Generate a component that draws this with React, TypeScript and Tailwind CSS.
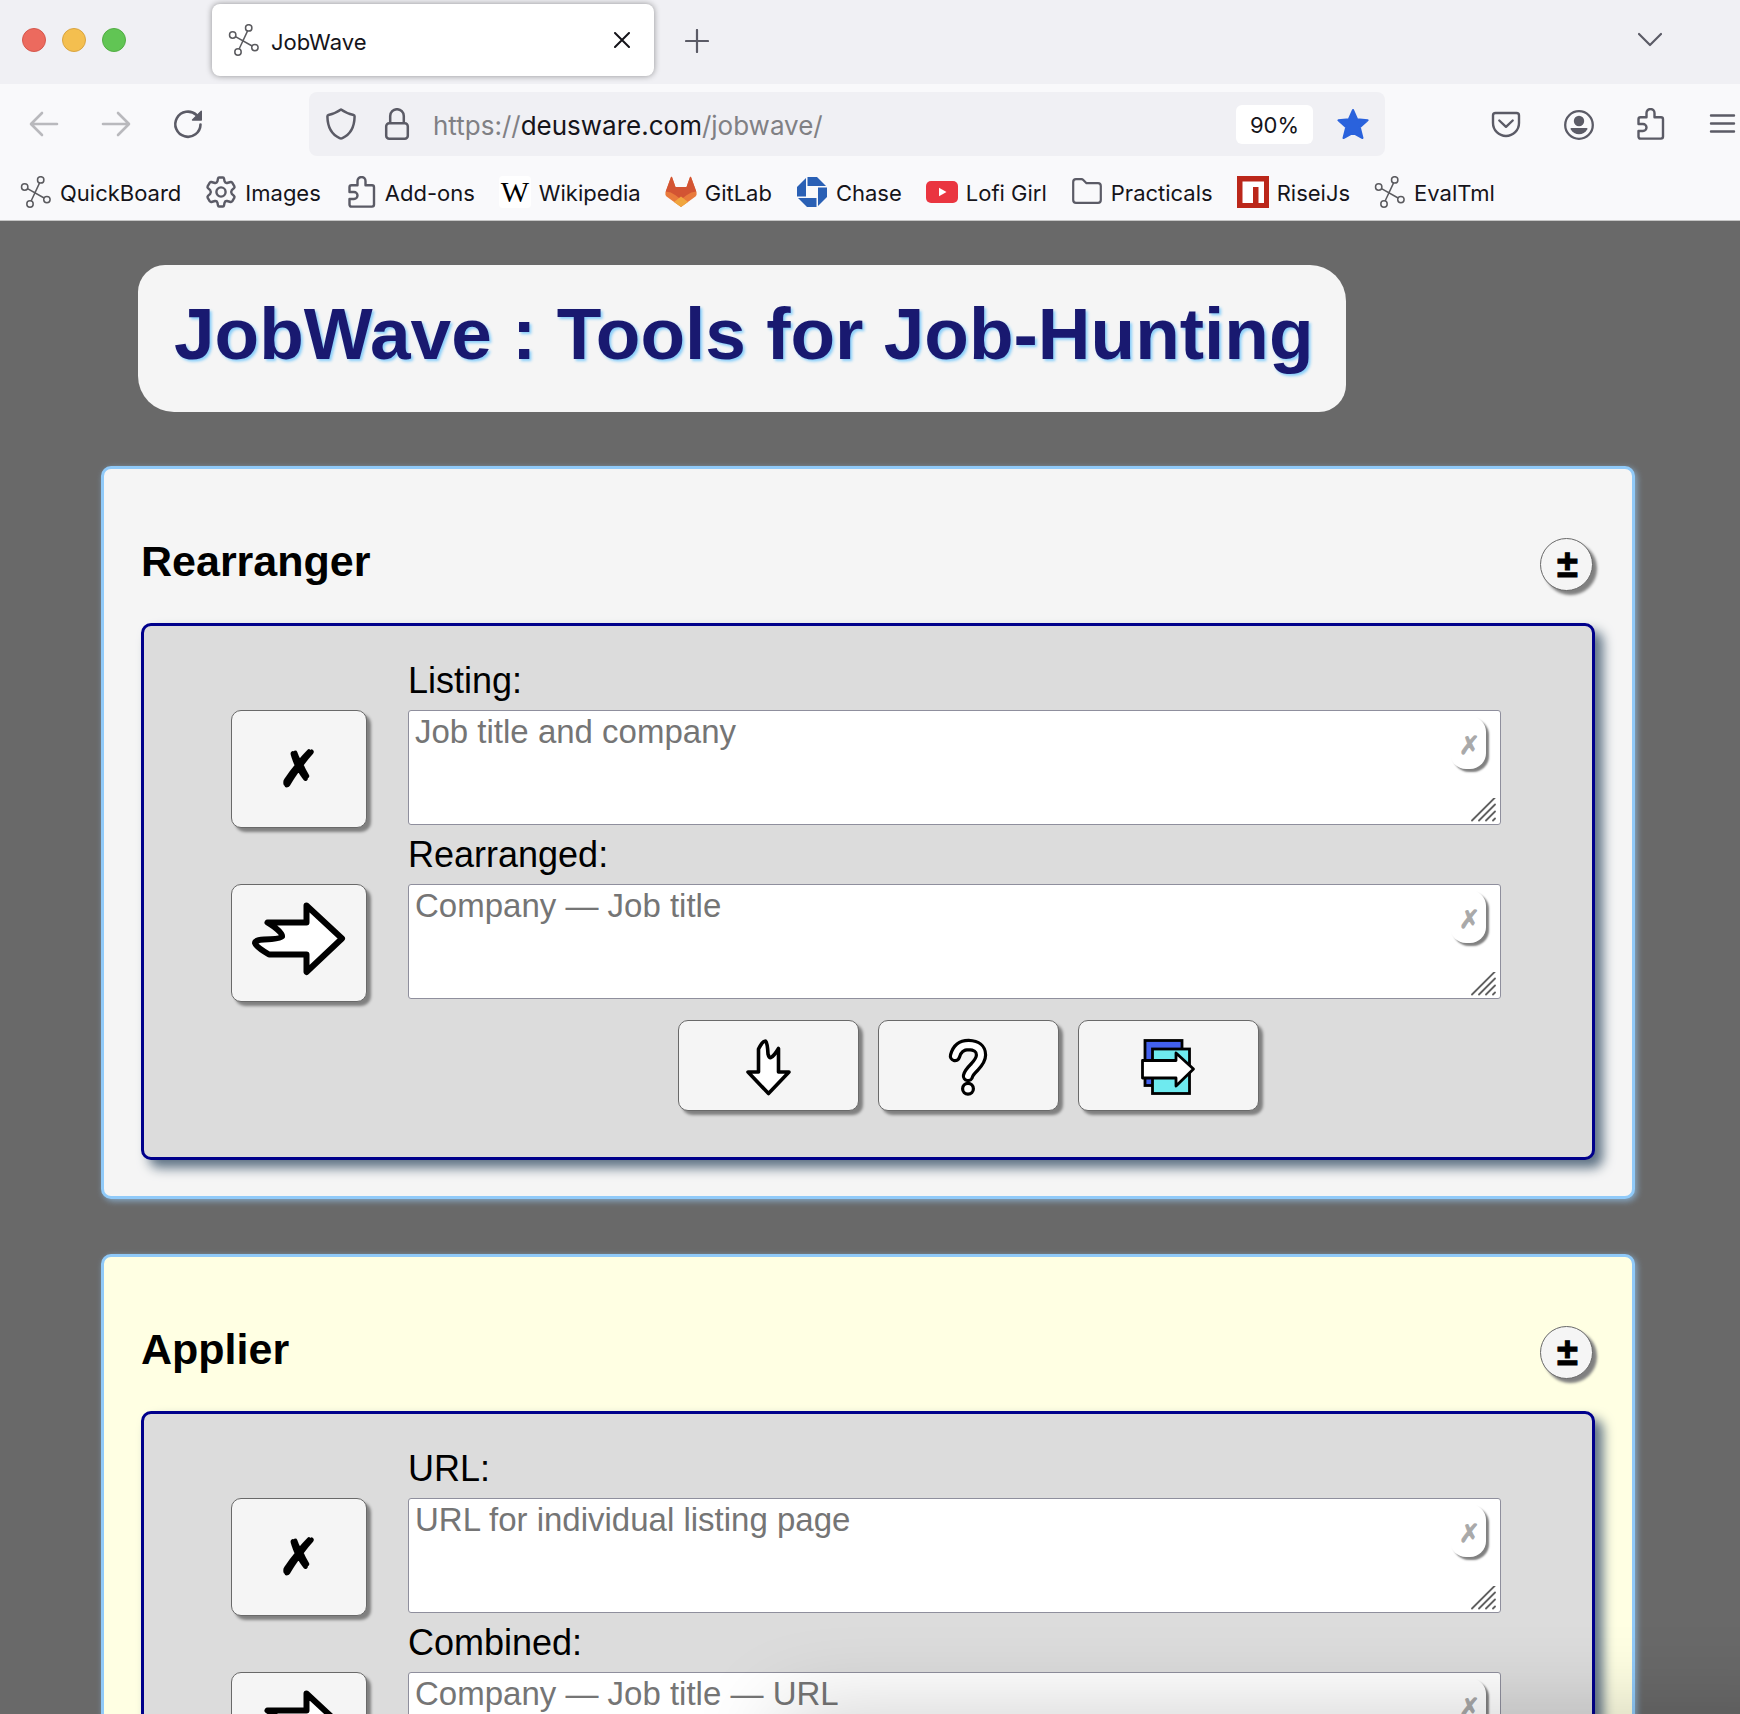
import React from "react";

type IconProps = { className?: string };

function NodesIcon({ className }: IconProps) {
  return (
    <svg viewBox="0 0 32 32" className={className} fill="none" stroke="#5b5b5f" strokeWidth="1.5" aria-hidden="true">
      <circle cx="20.7" cy="3.9" r="3.2" />
      <circle cx="4.7" cy="11" r="3.2" />
      <circle cx="26.9" cy="23.6" r="3.2" />
      <circle cx="10" cy="28" r="3.2" />
      <path d="M19.6 6.9 L11.1 25 M7.5 12.6 L24.1 22" />
    </svg>
  );
}

function ArrowIcon({ className }: IconProps) {
  return (
    <svg viewBox="0 0 32 32" className={className} fill="none" stroke="#b9b9bd" strokeWidth="2.6" strokeLinecap="round" strokeLinejoin="round" aria-hidden="true">
      <path d="M29 16 H3.5 M14 5 L3 16 L14 27" />
    </svg>
  );
}

function ReloadIcon({ className }: IconProps) {
  return (
    <svg viewBox="0 0 32 32" className={className} fill="none" stroke="#5b5b66" strokeWidth="2.6" strokeLinecap="round" aria-hidden="true">
      <path d="M28.5 16.5 A12.6 12.6 0 1 1 24.5 7" />
      <path d="M29.3 3.2 V12 H20.5 Z" fill="#5b5b66" strokeWidth="1.4" strokeLinejoin="round" />
    </svg>
  );
}

function ShieldIcon({ className }: IconProps) {
  return (
    <svg viewBox="0 0 32 32" className={className} fill="none" stroke="#5b5b66" strokeWidth="2.5" strokeLinejoin="round" aria-hidden="true">
      <path d="M16 1.6 C12 4.6 8 6 3.4 7 Q2.4 7.3 2.4 8.6 C2.6 19 6.5 26.5 14.6 30.2 Q16 30.9 17.4 30.2 C25.5 26.5 29.4 19 29.6 8.6 Q29.6 7.3 28.6 7 C24 6 20 4.6 16 1.6 Z" />
    </svg>
  );
}

function LockIcon({ className }: IconProps) {
  return (
    <svg viewBox="0 0 32 32" className={className} fill="none" stroke="#5b5b66" strokeWidth="2.5" aria-hidden="true">
      <rect x="5.2" y="15.2" width="21.6" height="15.5" rx="3" />
      <path d="M9.2 15 V8 A6.8 6.8 0 0 1 22.8 8 V15" />
    </svg>
  );
}

function StarIcon({ className }: IconProps) {
  return (
    <svg viewBox="0 0 32 32" className={className} fill="#2a62dc" stroke="#2a62dc" strokeWidth="2" strokeLinejoin="round" aria-hidden="true">
      <path d="M16 2 L20.1 11.2 L30.6 12.3 L22.8 19.3 L25.5 30 L16 24.8 L6.5 30 L9.2 19.3 L1.4 12.3 L11.9 11.2 Z" />
    </svg>
  );
}

function PocketIcon({ className }: IconProps) {
  return (
    <svg viewBox="0 0 32 32" className={className} fill="none" stroke="#5b5b66" strokeWidth="2.4" strokeLinecap="round" strokeLinejoin="round" aria-hidden="true">
      <path d="M5.5 5 H26.5 Q29 5 29 7.5 V15 A13 13 0 0 1 3 15 V7.5 Q3 5 5.5 5 Z" />
      <path d="M9.3 12.5 L16 18.8 L22.7 12.5" />
    </svg>
  );
}

function AccountIcon({ className }: IconProps) {
  return (
    <svg viewBox="0 0 32 32" className={className} aria-hidden="true">
      <circle cx="17" cy="17" r="13.8" fill="none" stroke="#5b5b66" strokeWidth="2.3" />
      <circle cx="17" cy="13" r="5.2" fill="#5b5b66" />
      <path d="M9.4 20 H24.6 Q26 20 25.2 21.5 A9.5 9.5 0 0 1 8.8 21.5 Q8 20 9.4 20 Z" fill="#5b5b66" />
    </svg>
  );
}

function PuzzleIcon({ className }: IconProps) {
  return (
    <svg viewBox="0 0 32 32" className={className} fill="none" stroke="#5b5b66" strokeWidth="2.4" strokeLinejoin="round" aria-hidden="true">
      <path d="M4.500 16 V11.2 Q4.500 9.2 6.500 9.2 H12.500 V5 A4 4 0 0 1 20.500 5 V9.2 H27 Q29 9.2 29 11.2 V28.6 Q29 30.6 27 30.6 H6.500 Q4.500 30.6 4.500 28.6 V23 H9 A3.5 3.5 0 0 0 9 16 Z" />
    </svg>
  );
}

function GearIcon({ className }: IconProps) {
  return (
    <svg viewBox="0 0 32 32" className={className} fill="none" stroke="#5b5b66" strokeWidth="2.4" strokeLinejoin="round" aria-hidden="true">
      <circle cx="16" cy="16" r="4.6" />
      <path d="M14 1.5 H18 Q18.8 1.5 19 2.4 L19.6 5.4 Q20.2 7.3 22 7 L25.6 6 Q26.6 5.8 27.2 6.6 L29.4 10.4 Q29.8 11.4 29 12.2 L26.8 14.2 Q25.6 16 26.8 17.8 L29 19.8 Q29.8 20.6 29.4 21.6 L27.2 25.4 Q26.6 26.2 25.6 26 L22 25 Q20.2 24.7 19.6 26.6 L19 29.6 Q18.8 30.5 18 30.5 H14 Q13.2 30.5 13 29.6 L12.4 26.6 Q11.8 24.7 10 25 L6.4 26 Q5.4 26.2 4.8 25.4 L2.6 21.6 Q2.2 20.6 3 19.8 L5.2 17.8 Q6.4 16 5.2 14.2 L3 12.2 Q2.2 11.4 2.6 10.4 L4.8 6.6 Q5.4 5.8 6.4 6 L10 7 Q11.8 7.3 12.4 5.4 L13 2.4 Q13.2 1.5 14 1.5 Z" />
    </svg>
  );
}

function WikipediaIcon({ className }: IconProps) {
  return (
    <span className={`${className} flex items-center justify-center rounded bg-white font-['Liberation_Serif'] text-[30px] leading-none text-black`} aria-hidden="true">
      W
    </span>
  );
}

function GitLabIcon({ className }: IconProps) {
  return (
    <svg viewBox="0 0 32 32" className={className} aria-hidden="true">
      <path d="M16 31 L1.5 20.5 Q0 19 0.4 16.5 L6 1 Q6.5 0.3 7 1 L10.5 11 H21.5 L25 1 Q25.5 0.3 26 1 L31.6 16.5 Q32 19 30.5 20.5 Z" fill="#e97a3c" />
      <path d="M0.7 15.5 L6 1 Q6.5 0.3 7 1 L10.5 11 H21.5 L25 1 Q25.5 0.3 26 1 L31.3 15.5 Q26 15.8 21.5 19.3 L16 23.5 L10.5 19.3 Q6 15.8 0.7 15.5 Z" fill="#d35433" />
      <path d="M16 31 L9 26 L16 20.5 L23 26 Z" fill="#f0a63f" />
    </svg>
  );
}

function ChaseIcon({ className }: IconProps) {
  return (
    <svg viewBox="0 0 32 32" className={className} fill="#2a60b5" aria-hidden="true">
      <path d="M11.5 1 H21 L30 10 H11.5 Z" />
      <path d="M31 11.5 V21 L22 30 V11.5 Z" />
      <path d="M20.5 31 H11 L2 22 H20.5 Z" />
      <path d="M1 20.5 V11 L10 2 V20.5 Z" />
    </svg>
  );
}

function YouTubeIcon({ className }: IconProps) {
  return (
    <svg viewBox="0 0 32 32" className={className} aria-hidden="true">
      <rect x="0" y="5" width="32" height="22" rx="5" fill="#ea3540" />
      <path d="M13 11.8 L20.5 16 L13 20.2 Z" fill="#fff" />
    </svg>
  );
}

function FolderIcon({ className }: IconProps) {
  return (
    <svg viewBox="0 0 32 32" className={className} fill="none" stroke="#5b5b66" strokeWidth="2.2" strokeLinejoin="round" aria-hidden="true">
      <path d="M2.2 24 V6 Q2.2 3.2 5 3.2 H10.5 Q11.5 3.2 12.3 4 L15.5 7.2 H27 Q29.8 7.2 29.8 10 V24 Q29.8 26.8 27 26.8 H5 Q2.2 26.8 2.2 24 Z" />
    </svg>
  );
}

function NpmIcon({ className }: IconProps) {
  return (
    <svg viewBox="0 0 32 32" className={className} aria-hidden="true">
      <rect width="32" height="32" fill="#bb271a" />
      <path d="M5.5 5.5 H27 V27 H21.5 V11 H16 V27 H5.5 Z" fill="#fff" />
    </svg>
  );
}

function TornArrowRight({ className }: IconProps) {
  return (
    <svg viewBox="0 0 96 76" className={className} fill="#fff" stroke="#000" strokeWidth="6" strokeLinejoin="round" aria-hidden="true">
      <path d="M16.5 21.5 H55.5 V4.500 L91 37.500 L55.5 71 V53.500 H18 Q5 46 4 42 Q4 39 13 38.500 Q29 38 31 35.500 Q32 31 16.5 21.5 Z" />
    </svg>
  );
}

function TornArrowDown({ className }: IconProps) {
  return (
    <svg viewBox="0 0 48 58" className={className} fill="#fff" stroke="#000" strokeWidth="3.6" strokeLinejoin="round" aria-hidden="true">
      <path d="M4 34 H14.5 V11 Q18.5 3 21.5 3 Q23.5 5 24 16 Q25 20 27 19.5 Q30 18 34.5 10.5 V34 H45 L24.5 55.5 Z" />
    </svg>
  );
}

function QuestionIcon({ className }: IconProps) {
  return (
    <svg viewBox="0 0 44 58" className={className} fill="none" strokeLinecap="round" strokeLinejoin="round" aria-hidden="true">
      <path d="M9 18 Q12 7 22.500 7 Q35 7.5 35 17 Q35 22 28.5 29 Q22.5 35 22 38" stroke="#000" strokeWidth="12.4" />
      <path d="M9 18 Q12 7 22.500 7 Q35 7.5 35 17 Q35 22 28.5 29 Q22.5 35 22 38" stroke="#fff" strokeWidth="6" />
      <circle cx="22" cy="50.800" r="5.4" fill="#fff" stroke="#000" strokeWidth="3.2" />
    </svg>
  );
}

function TransferIcon({ className }: IconProps) {
  return (
    <svg viewBox="0 0 56 58" className={className} stroke="#000" strokeWidth="2.8" aria-hidden="true">
      <rect x="5" y="2.5" width="37" height="45" fill="#4361ee" />
      <rect x="12.5" y="11" width="37" height="44.5" fill="#6eeaef" />
      <path d="M2.5 22.5 H36 V15 L53.5 31 L36 48 V40 H2.5 Z" fill="#fff" strokeLinejoin="round" />
    </svg>
  );
}

const bookmarks = [
  { name: "QuickBoard", Icon: NodesIcon },
  { name: "Images", Icon: GearIcon },
  { name: "Add-ons", Icon: PuzzleIcon },
  { name: "Wikipedia", Icon: WikipediaIcon },
  { name: "GitLab", Icon: GitLabIcon },
  { name: "Chase", Icon: ChaseIcon },
  { name: "Lofi Girl", Icon: YouTubeIcon },
  { name: "Practicals", Icon: FolderIcon },
  { name: "RiseiJs", Icon: NpmIcon },
  { name: "EvalTml", Icon: NodesIcon },
];

function BrowserChrome() {
  return (
    <header className="shrink-0 border-b border-[#c6c6c6] bg-[#f9f9fb] font-['Inter',sans-serif] text-[#15141a]">
      <div className="flex h-[84px] items-start bg-[#f0f0f4] pl-[22px]">
        <div className="flex gap-4 pt-7">
          <button aria-label="Close window" className="size-6 rounded-full border border-[#d5574c] bg-[#ec6a5e]" />
          <button aria-label="Minimize window" className="size-6 rounded-full border border-[#d9a440] bg-[#f4bf4f]" />
          <button aria-label="Zoom window" className="size-6 rounded-full border border-[#52ad43] bg-[#61c554]" />
        </div>
        <div className="mt-1 ml-[86px] flex h-[72px] w-[442px] items-center rounded-lg bg-white pr-6 pl-4 shadow-[0_0_6px_rgba(0,0,0,0.4)]">
          <NodesIcon className="size-8" />
          <span className="ml-[11px] flex-1 pt-1 text-[22px]">JobWave</span>
          <button aria-label="Close tab">
            <svg viewBox="0 0 16 16" className="size-4" stroke="#15141a" strokeWidth="2" strokeLinecap="round" aria-hidden="true">
              <path d="M1 1 L15 15 M15 1 L1 15" />
            </svg>
          </button>
        </div>
        <button aria-label="New tab" className="mt-[29px] ml-[31px]">
          <svg viewBox="0 0 24 24" className="size-6" stroke="#5b5b66" strokeWidth="2.2" strokeLinecap="round" aria-hidden="true">
            <path d="M12 1 V23 M1 12 H23" />
          </svg>
        </button>
        <button aria-label="List all tabs" className="mt-[27px] mr-[78px] ml-auto">
          <svg viewBox="0 0 24 24" className="size-6" fill="none" stroke="#5b5b66" strokeWidth="2.2" strokeLinecap="round" strokeLinejoin="round" aria-hidden="true">
            <path d="M1 7 L12 18 L23 7" />
          </svg>
        </button>
      </div>

      <div className="flex items-center pt-2 pr-[2px] pl-7">
        <button aria-label="Back">
          <ArrowIcon className="size-8" />
        </button>
        <button aria-label="Forward" className="ml-10">
          <ArrowIcon className="size-8 rotate-180" />
        </button>
        <button aria-label="Reload" className="ml-10">
          <ReloadIcon className="size-8" />
        </button>
        <div className="ml-[105px] flex h-16 w-[1076px] min-w-0 items-center rounded-lg bg-[#f0f0f4] px-4">
          <ShieldIcon className="size-8 shrink-0" />
          <LockIcon className="ml-6 size-8 shrink-0" />
          <a href="https://deusware.com/jobwave/" className="ml-5 flex-1 pt-[2px] text-[26px] text-[#808084]">
            https://<span className="text-[#15141a]">deusware.com</span>/jobwave/
          </a>
          <button className="mr-6 h-[39px] w-[77px] rounded-md bg-white pt-[2px] text-[22px]">90%</button>
          <button aria-label="Bookmark this page">
            <StarIcon className="size-8" />
          </button>
        </div>
        <div className="ml-auto flex items-center gap-10">
          <button aria-label="Save to Pocket">
            <PocketIcon className="size-8" />
          </button>
          <button aria-label="Account">
            <AccountIcon className="size-8" />
          </button>
          <button aria-label="Extensions">
            <PuzzleIcon className="size-8" />
          </button>
          <button aria-label="Menu">
            <svg viewBox="0 0 32 32" className="size-8" stroke="#5b5b66" strokeWidth="2.4" strokeLinecap="round" aria-hidden="true">
              <path d="M5 7.5 H28 M5 15.5 H28 M5 23.5 H28" />
            </svg>
          </button>
        </div>
      </div>

      <nav aria-label="Bookmarks" className="flex h-16 items-center gap-6 pt-2 pl-5">
        {bookmarks.map(({ name, Icon }) => (
          <a key={name} href="#" className="flex items-center gap-2 text-[22px] whitespace-nowrap">
            <Icon className="size-8" />
            <span className="pt-[2px]">{name}</span>
          </a>
        ))}
      </nav>
    </header>
  );
}

const raised = "border border-[#696969] bg-[#f5f5f5] shadow-[4px_4px_3px_#808080]";

type FieldProps = {
  id: string;
  label: string;
  placeholder: string;
  action: string;
  children: React.ReactNode;
};

function Field({ id, label, placeholder, action, children }: FieldProps) {
  return (
    <div className="grid grid-cols-[136px_1fr] gap-x-[41px]">
      <label htmlFor={id} className="col-start-2 pb-[3px] text-[36px] leading-[53px]">
        {label}
      </label>
      <button aria-label={action} className={`${raised} col-start-1 flex h-[118px] items-center justify-center rounded-[10px]`}>
        {children}
      </button>
      <div className="relative">
        <textarea
          id={id}
          placeholder={placeholder}
          className="block h-[115px] w-full resize-none rounded-[3px] border border-[#8f8f9d] bg-white px-[6px] py-[1px] text-[33px] leading-10 placeholder:text-[#757575]"
        />
        <button
          aria-label={`Clear ${label}`}
          className="absolute top-[6px] right-[15px] flex h-[53px] w-9 items-center justify-center rounded-[16px] bg-white pt-[5px] pl-[3px] font-['DejaVu_Sans'] text-[25px] leading-none font-bold text-[#a9a9a9] shadow-[3px_3px_2px_#808080] [-webkit-text-stroke:1px_#a9a9a9]"
        >
          ✗
        </button>
        <svg viewBox="0 0 26 26" className="pointer-events-none absolute right-1 bottom-1 size-[26px]" stroke="#606060" strokeWidth="1.8" strokeLinecap="round" aria-hidden="true">
          <path d="M1 22.500 L24 -0.500 M8 22.500 L24 6.500 M15 22.500 L24 13.500 M22 22.500 L24 20.500" />
        </svg>
      </div>
    </div>
  );
}

type ToolProps = {
  title: string;
  tone: string;
  fields: { id: string; label: string; placeholder: string }[];
};

function ToolCard({ title, tone, fields }: ToolProps) {
  return (
    <section className={`${tone} rounded-[10px] border-[3px] border-[#90caf9] px-[37px] pt-[69px] pb-9 shadow-[2px_2px_6px_#87a9c6]`}>
      <div className="flex h-[53px] items-start justify-between pr-[2px]">
        <h2 className="text-[43px] leading-[46px] font-bold">{title}</h2>
        <button
          aria-label={`Show or hide ${title}`}
          className={`${raised} flex size-[53px] items-center justify-center rounded-full pb-[2px] pl-[2px] text-[38px] leading-none font-bold [-webkit-text-stroke:1px_#000]`}
        >
          ±
        </button>
      </div>
      <div className="mt-8 rounded-[10px] border-[3px] border-[#00008b] bg-[#dcdcdc] pt-7 pr-[91px] pb-[46px] pl-[87px] shadow-[8px_8px_12px_#5f7385]">
        <Field {...fields[0]} action="Clear all">
          <span className="font-['DejaVu_Sans'] text-[49px] leading-none font-bold [-webkit-text-stroke:2px_#000]">✗</span>
        </Field>
        <Field {...fields[1]} action="Convert">
          <TornArrowRight className="-mt-2 h-[76px] w-24" />
        </Field>
        <div className="mt-[18px] flex justify-center gap-[19px] pl-[204px]">
          <button aria-label="Move down" className={`${raised} flex h-[91px] w-[181px] items-center justify-center rounded-[10px] pt-[2px]`}>
            <TornArrowDown className="h-[58px] w-12" />
          </button>
          <button aria-label="Help" className={`${raised} flex h-[91px] w-[181px] items-center justify-center rounded-[10px] pt-[2px]`}>
            <QuestionIcon className="h-[58px] w-11" />
          </button>
          <button aria-label="Copy over" className={`${raised} flex h-[91px] w-[181px] items-center justify-center rounded-[10px] pt-[2px]`}>
            <TransferIcon className="h-[58px] w-14" />
          </button>
        </div>
      </div>
    </section>
  );
}

export default function App() {
  return (
    <div className="flex h-screen flex-col overflow-hidden bg-[#696969]">
      <BrowserChrome />
      <main className="relative min-h-0 flex-1 overflow-hidden pt-11 pr-[105px] pl-[101px] font-['Liberation_Sans',sans-serif] text-black">
        <h1 className="ml-[37px] w-fit rounded-tl-[27px] rounded-tr-[36px] rounded-br-[27px] rounded-bl-[36px] bg-[#f5f5f5] pt-[27px] pr-8 pb-9 pl-9 text-[73px] leading-[84px] font-bold text-[#191970] [text-shadow:2px_2px_3px_#87cefa]">
          JobWave : Tools for Job-Hunting
        </h1>
        <div className="mt-[54px] flex flex-col gap-[55px]">
          <ToolCard
            title="Rearranger"
            tone="bg-[#f5f5f5]"
            fields={[
              { id: "listing", label: "Listing:", placeholder: "Job title and company" },
              { id: "rearranged", label: "Rearranged:", placeholder: "Company — Job title" },
            ]}
          />
          <ToolCard
            title="Applier"
            tone="bg-[#ffffe3]"
            fields={[
              { id: "url", label: "URL:", placeholder: "URL for individual listing page" },
              { id: "combined", label: "Combined:", placeholder: "Company — Job title — URL" },
            ]}
          />
        </div>
        <div className="pointer-events-none absolute top-full -right-24 left-[780px] h-24 shadow-[0_0_90px_rgba(0,0,0,0.2)]" aria-hidden="true" />
      </main>
    </div>
  );
}
